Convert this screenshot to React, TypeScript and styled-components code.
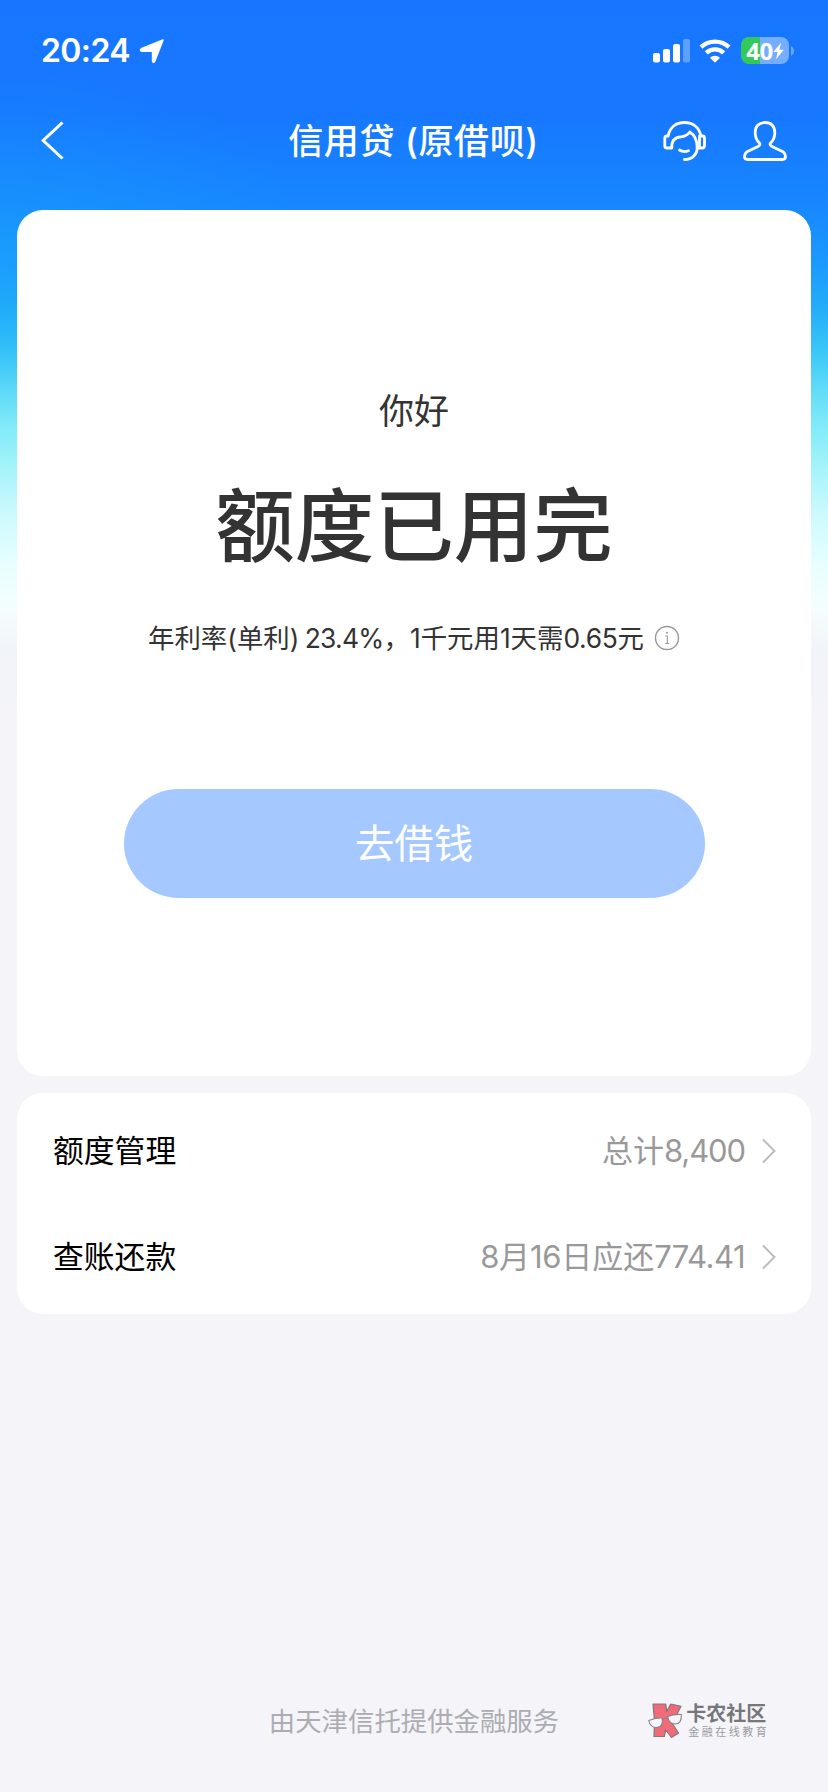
import React from "react";
import styled, { createGlobalStyle } from "styled-components";

const GlobalStyle = createGlobalStyle`
  * { box-sizing: border-box; }
  body {
    margin: 0;
    background: #f4f4f9;
    font-family: Inter, "Noto Sans CJK SC", sans-serif;
  }
`;

const Page = styled.main`
  width: 828px;
  height: 1792px;
  display: flex;
  flex-direction: column;
  overflow: hidden;
  background:
    radial-gradient(ellipse 300px 180px at 0 240px, rgba(24, 166, 252, 0.4), rgba(24, 150, 255, 0)) no-repeat,
    linear-gradient(
      180deg,
      #1776ff 0,
      #1777ff 110px,
      #1787ff 205px,
      #1b9afd 265px,
      #24aef9 310px,
      #38c6f7 350px,
      #62dcf8 390px,
      #84ebf9 430px,
      #a2f3fa 465px,
      #ccf9fd 513px,
      #e6fffe 563px,
      #f6fdfe 610px,
      #f1f4f9 650px,
      #f4f4f9 710px
    );
`;

const StatusBar = styled.header`
  display: flex;
  height: 100px;
  padding: 1px 34px 0 41px;
  align-items: center;
  color: #fff;
`;

const Clock = styled.time`
  width: 98px;
  font-size: 32px;
  font-weight: 600;
  line-height: 40px;
  letter-spacing: -0.6px;
`;

const Indicators = styled.div`
  display: flex;
  align-items: center;
  margin-left: auto;
`;

const Battery = styled.div`
  display: flex;
  align-items: center;
  justify-content: center;
  width: 48px;
  height: 27px;
  margin-left: 10px;
  border-radius: 8px;
  background: linear-gradient(90deg, #34c759 19px, #75adff 19px);
  font: 700 24px/27px "Noto Sans", sans-serif;
  letter-spacing: -0.5px;
`;

const Nav = styled.nav`
  display: grid;
  grid-template-columns: 1fr auto 1fr;
  align-items: center;
  height: 80px;
  padding: 2px 41px 0 40px;
  color: #fff;
`;

const NavTitle = styled.h1`
  margin: 0;
  font-size: 35px;
  font-weight: 500;
  line-height: 50px;
  letter-spacing: 0.6px;
  white-space: nowrap;
`;

const NavActions = styled.div`
  display: flex;
  justify-content: flex-end;
  gap: 36px;
`;

const Content = styled.div`
  display: flex;
  flex-direction: column;
  gap: 17px;
  padding: 30px 17px 0;
`;

const Card = styled.section`
  border-radius: 26px;
  background: #fff;
`;

const QuotaCard = styled(Card)`
  display: flex;
  flex-direction: column;
  align-items: center;
  height: 866px;
  padding-top: 176px;
  color: #333;
`;

const Greeting = styled.p`
  margin: 0;
  font-size: 35px;
  line-height: 50px;
`;

const QuotaTitle = styled.h2`
  margin: 40px 0 0;
  font-size: 79.5px;
  font-weight: 500;
  line-height: 100px;
`;

const Rate = styled.p`
  display: flex;
  align-items: center;
  gap: 10px;
  margin: 42px 0 0;
  font-size: 26.4px;
  line-height: 40px;
  word-spacing: -2px;
  white-space: nowrap;
`;

const Figure = styled.span<{ $spacing: number }>`
  letter-spacing: ${({ $spacing }) => $spacing}px;
`;

const BorrowButton = styled.button`
  width: 581px;
  height: 109px;
  margin-top: 131px;
  padding: 0;
  border: 0;
  border-radius: 55px;
  background: #a4c8ff;
  color: #fff;
  font: 400 39.4px/60px Inter, "Noto Sans CJK SC", sans-serif;
`;

const ListCard = styled(Card)`
  height: 221px;
  padding: 5px 34px 0 36px;
`;

const Row = styled.div`
  display: flex;
  align-items: center;
  height: 106px;
`;

const RowLabel = styled.span`
  color: #000;
  font-size: 30.8px;
  line-height: 44px;
`;

const RowValue = styled.span`
  margin-left: auto;
  margin-right: 16px;
  color: #999;
  font-size: 31px;
  line-height: 44px;
`;

const Footer = styled.footer`
  display: grid;
  grid-template-columns: 1fr auto 1fr;
  align-items: center;
  height: 60px;
  margin-top: auto;
  margin-bottom: 41px;
`;

const Provider = styled.span`
  grid-column: 2;
  color: #adadb1;
  font-size: 26.4px;
  line-height: 40px;
`;

const Brand = styled.div`
  display: flex;
  align-items: center;
  gap: 3px;
  margin-left: 89px;
`;

const BrandText = styled.div`
  display: flex;
  flex-direction: column;
  white-space: nowrap;
`;

const BrandName = styled.span`
  color: #77777b;
  font-size: 20px;
  font-weight: 700;
  line-height: 21px;
`;

const BrandTag = styled.span`
  padding-left: 2px;
  color: #9c9ca0;
  font-size: 11px;
  line-height: 14px;
  letter-spacing: 2.5px;
`;

const WifiSvg = styled.svg`
  margin-left: 9px;
`;

const TipSvg = styled.svg`
  margin-left: 2px;
`;

const LocationIcon = () => (
  <svg width="26" height="26" viewBox="0 0 26 26">
    <path d="M24 2 15.5 23.6Q14.4 25.3 13.6 23V13.2H2.6Q.5 12.1 2.3 10.8Z" fill="#fff" stroke="#fff" strokeWidth="1.6" strokeLinejoin="round" />
  </svg>
);

const SignalIcon = () => (
  <svg width="37" height="24" viewBox="0 0 37 24" fill="#fff">
    <rect x="0" y="14" width="7" height="9.5" rx="2" />
    <rect x="10" y="10" width="7" height="13.5" rx="2" />
    <rect x="20" y="5" width="7" height="18.5" rx="2" />
    <rect x="30" y="0" width="7" height="23.5" rx="2" opacity=".3" />
  </svg>
);

const WifiIcon = () => (
  <WifiSvg width="32" height="24" viewBox="0 0 32 24">
    <path d="M2 8.2a20.3 20.3 0 0 1 28 0M7.3 13.9a12.6 12.6 0 0 1 17.4 0" fill="none" stroke="#fff" strokeWidth="4.4" />
    <path d="M16 23.7 10.9 18.7a7.4 7.4 0 0 1 10.2 0Z" fill="#fff" />
  </WifiSvg>
);

const BoltIcon = () => (
  <svg width="11" height="18" viewBox="0 0 12 18">
    <path d="M8.8 0 .3 10h4.6L3.3 18 11.8 7.5H7.1Z" fill="#fff" />
  </svg>
);

const BatteryTip = () => (
  <TipSvg width="3" height="10" viewBox="0 0 3 10">
    <path d="M0 0c4 2 4 8 0 10Z" fill="#69a7ff" />
  </TipSvg>
);

const BackIcon = () => (
  <svg width="26" height="42" viewBox="0 0 26 42">
    <path d="M22.5 2.5 3.2 20.5 22.5 38.5" fill="none" stroke="#fff" strokeWidth="3" />
  </svg>
);

const ServiceIcon = () => (
  <svg width="44" height="42" viewBox="0 0 44 42" fill="none" stroke="#fff" strokeWidth="2.8" strokeLinecap="round" strokeLinejoin="round">
    <path d="M5 16C7 7 13.500 2.500 21.500 2.500S36 7 38 16" />
    <path d="M5 16H3.800Q1.800 16 1.800 18V26Q1.800 28 3.800 28H8.800C8.300 20.500 12 17.200 18 16.800Q23.500 16.500 26.800 12Q34 16.500 34.200 27.500C34.300 34 29.500 39.500 21.500 39.500" />
    <path d="M34.200 28H39Q41.500 28 41.500 25.500V18Q41.500 16 39.500 16H36.500V27M16.500 30Q20.500 32.700 25.500 30.800" />
  </svg>
);

const PersonIcon = () => (
  <svg width="44" height="42" viewBox="0 0 44 42" fill="none" stroke="#fff" strokeWidth="2.8" strokeLinejoin="round">
    <path d="M22 2.500C15.500 2.500 12.200 6.500 12.200 12.500C12.200 17 13.500 20.500 16.500 23C17.500 24.500 16.500 26 14.500 26.800L4.500 31.500Q1.800 33 1.500 36.500Q1.500 39.500 4.500 39.500H39.500Q42.500 39.500 42.500 36.500Q42.200 33 39.500 31.500L29.500 26.800C27.500 26 26.500 24.500 27.500 23C30.500 20.500 31.800 17 31.800 12.500C31.800 6.500 28.500 2.500 22 2.500Z" />
  </svg>
);

const InfoIcon = () => (
  <svg width="26" height="26" viewBox="0 0 26 26" fill="none" stroke="#999" strokeWidth="1.4">
    <circle cx="13" cy="13" r="11.500" />
    <path d="M11.300 11H13.300V18.500M11.300 18.500H15.300" strokeWidth="1.100" />
    <circle cx="13" cy="7.800" r="1" fill="#999" stroke="none" />
  </svg>
);

const Chevron = () => (
  <svg width="16" height="26" viewBox="0 0 16 26">
    <path d="M2 1.500 13.500 13 2 24.500" fill="none" stroke="#bbb" strokeWidth="1.900" />
  </svg>
);

const BrandMark = () => (
  <svg width="35" height="36" viewBox="0 0 35 36" strokeLinejoin="round">
    <path d="M5 1H17.700L18.700 8.500 22.700 1 33 3.300 28 13 24 20 30.500 30 23.500 34.500 17.700 27 16.300 33.500H6L6.500 18Z" fill="#ef6b78" stroke="#85767b" strokeWidth="1.200" />
    <path d="M.800 17.500Q7 14.500 14 15Q15.800 24 8.500 24.500Q2 24.500 .800 17.500ZM19.700 13.500Q26 11 33.300 11.500Q34 20.500 27.500 21Q21 21 19.700 13.500Z" fill="#f4f4f9" stroke="#85858a" strokeWidth="1.100" />
    <path d="M14.500 16.500Q17 14.500 19.900 15" stroke="#85858a" fill="none" />
  </svg>
);

export default function App() {
  return (
    <>
      <GlobalStyle />
      <Page>
        <StatusBar>
          <Clock>20:24</Clock>
          <LocationIcon />
          <Indicators>
            <SignalIcon />
            <WifiIcon />
            <Battery>40<BoltIcon /></Battery>
            <BatteryTip />
          </Indicators>
        </StatusBar>
        <Nav>
          <BackIcon />
          <NavTitle>信用贷 (原借呗)</NavTitle>
          <NavActions>
            <ServiceIcon />
            <PersonIcon />
          </NavActions>
        </Nav>
        <Content>
          <QuotaCard>
            <Greeting>你好</Greeting>
            <QuotaTitle>额度已用完</QuotaTitle>
            <Rate>
              <span>
                年利率(单利) <Figure $spacing={-0.7}>23.4%</Figure>，1千元用1天需<Figure $spacing={-0.3}>0.65</Figure>元
              </span>
              <InfoIcon />
            </Rate>
            <BorrowButton>去借钱</BorrowButton>
          </QuotaCard>
          <ListCard>
            <Row>
              <RowLabel>额度管理</RowLabel>
              <RowValue>总计<Figure $spacing={-1.1}>8,400</Figure></RowValue>
              <Chevron />
            </Row>
            <Row>
              <RowLabel>查账还款</RowLabel>
              <RowValue>
                <Figure $spacing={-0.4}>8</Figure>月<Figure $spacing={-0.4}>16</Figure>日应还<Figure $spacing={-0.5}>774.41</Figure>
              </RowValue>
              <Chevron />
            </Row>
          </ListCard>
        </Content>
        <Footer>
          <Provider>由天津信托提供金融服务</Provider>
          <Brand>
            <BrandMark />
            <BrandText>
              <BrandName>卡农社区</BrandName>
              <BrandTag>金融在线教育</BrandTag>
            </BrandText>
          </Brand>
        </Footer>
      </Page>
    </>
  );
}
